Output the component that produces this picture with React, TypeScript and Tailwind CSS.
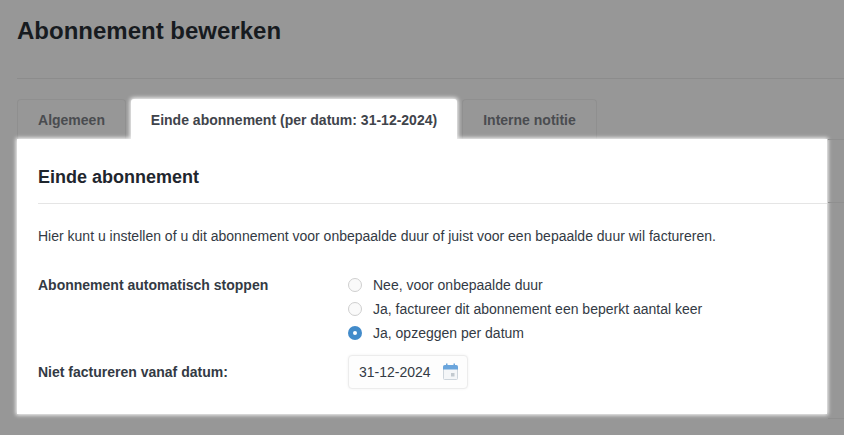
const options = [
  { label: 'Nee, voor onbepaalde duur', checked: false },
  { label: 'Ja, factureer dit abonnement een beperkt aantal keer', checked: false },
  { label: 'Ja, opzeggen per datum', checked: true },
];

function Radio({ checked }: { checked: boolean }) {
  if (checked) {
    return (
      <span className="flex h-[14px] w-[14px] items-center justify-center rounded-full bg-[#428bca]">
        <span className="h-[4px] w-[4px] rounded-full bg-white" />
      </span>
    );
  }
  return <span className="h-[14px] w-[14px] rounded-full border border-[#cfcfcf] bg-[#fafafa]" />;
}

function CalendarIcon() {
  return (
    <svg width="16" height="18" viewBox="0 0 16 18" className="block">
      <rect x="0.5" y="2.5" width="14" height="14" rx="1" fill="#f4f6f8" stroke="#cdd5dc" />
      <path d="M0 4a2 2 0 0 1 2-2h11a2 2 0 0 1 2 2v2.5H0z" fill="#6aa5dc" />
      <rect x="3" y="0.5" width="1.5" height="3" fill="#6aa5dc" />
      <rect x="10.5" y="0.5" width="1.5" height="3" fill="#6aa5dc" />
      <rect x="8" y="10" width="3.5" height="3.5" fill="#c2c9cf" />
    </svg>
  );
}

export default function App() {
  return (
    <div className="h-[435px] w-[844px] overflow-hidden bg-[#979797] pl-[17px] font-['Liberation_Sans',Arial,sans-serif] text-[14px] text-[#333a44]">
      {/* titel */}
      <div className="h-[79px] border-b border-[#8c8c8c] pt-[17px]">
        <h1 className="text-[24px] font-bold leading-[28px] text-[#171b20]">Abonnement bewerken</h1>
      </div>

      {/* tabs */}
      <div className="mt-[20px] flex h-[40px] font-bold">
        <div className="flex w-[109px] items-center justify-center rounded-t-[4px] border border-b-0 border-[#8f8f8f] pt-[2px] text-[#4a4c50]">
          Algemeen
        </div>
        <div className="relative z-10 ml-[5px] flex w-[326px] items-center justify-center rounded-t-[3px] bg-white pt-[2px] text-[#3f444b] shadow-[0_0_4px_1px_#ffffff]">
          Einde abonnement (per datum: 31-12-2024)
        </div>
        <div className="ml-[5px] flex w-[135px] items-center justify-center rounded-t-[4px] border border-b-0 border-[#8f8f8f] pt-[2px] text-[#4a4c50]">
          Interne notitie
        </div>
      </div>

      <div className="flex">
        {/* panel */}
        <div className="h-[275px] w-[810px] bg-white pl-[21px] shadow-[0_0_4px_1px_#ffffff]">
          <div className="h-[65px] border-b border-[#e5e5e5] pt-[26px]">
            <h2 className="text-[18px] font-bold leading-[24px] text-[#1f262e]">Einde abonnement</h2>
          </div>
          <p className="mt-[23px] leading-[18px]">
            Hier kunt u instellen of u dit abonnement voor onbepaalde duur of juist voor een bepaalde duur wil factureren.
          </p>

          <div className="mt-[31px] flex">
            <div className="w-[310px] font-bold leading-[18px]">Abonnement automatisch stoppen</div>
            <div className="flex flex-col gap-[6px]">
              {options.map((option) => (
                <div key={option.label} className="flex h-[18px] items-center gap-[11px]">
                  <Radio checked={option.checked} />
                  <span>{option.label}</span>
                </div>
              ))}
            </div>
          </div>

          <div className="mt-[13px] flex items-center">
            <div className="w-[310px] font-bold">Niet factureren vanaf datum:</div>
            <div className="flex h-[34px] w-[120px] items-center justify-between rounded-[4px] border border-[#ececec] bg-[#fdfdfd] pr-[8px] pl-[10px] shadow-[0_0_3px_rgba(0,0,0,0.06)]">
              <span>31-12-2024</span>
              <CalendarIcon />
            </div>
          </div>
        </div>
        <div className="ml-[1px] h-[280px] flex-1 border-b border-[#8f8f8f]">
          <div className="h-[64px] border-b border-t border-[#8f8f8f]" />
        </div>
      </div>
    </div>
  );
}
